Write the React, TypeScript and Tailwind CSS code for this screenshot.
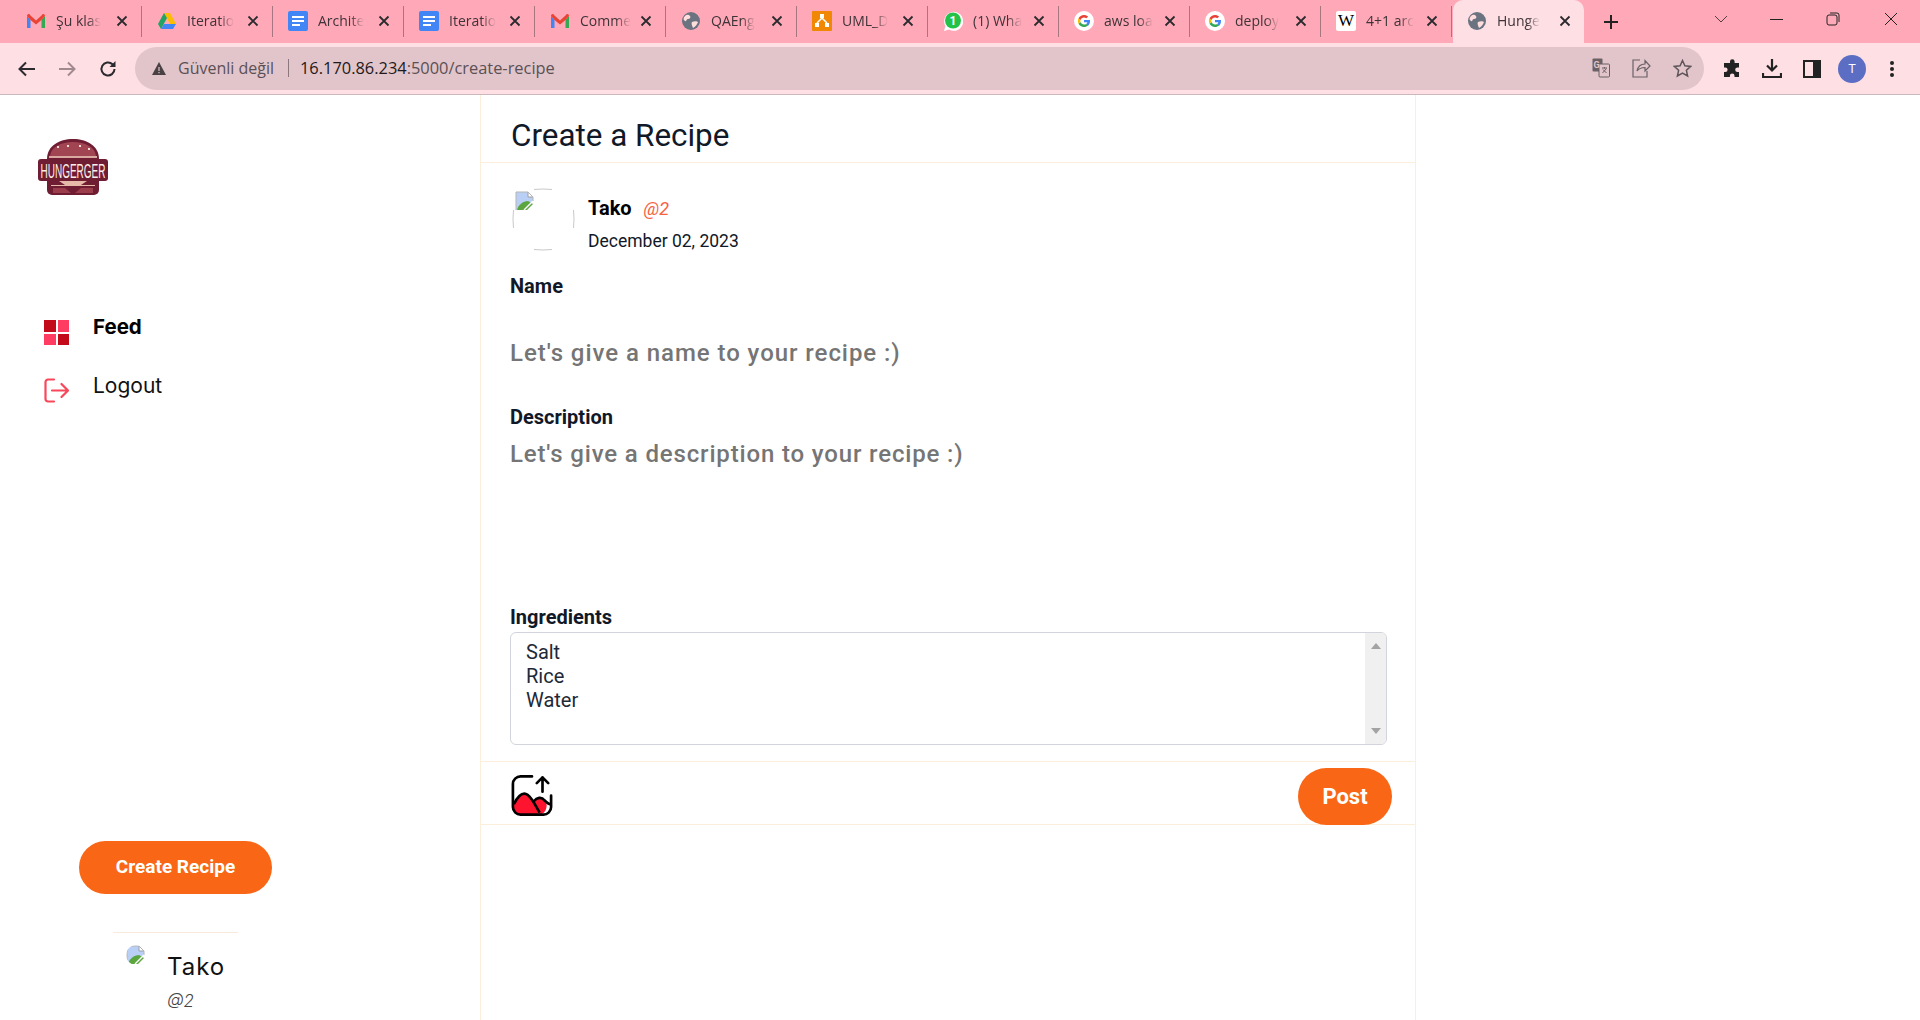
import React from 'react';

const GmailIcon = () => (
  <svg width="20" height="20" viewBox="0 0 20 20">
    <path d="M1 5v12h3.500V9L1 5z" fill="#4285f4" />
    <path d="M15.500 17H19V5l-3.500 4v8z" fill="#34a853" />
    <path d="M4.500 4.500 10 9.500l5.500-5 1-1.200c1.300-.6 2.500.4 2.500 1.700L15.500 9 10 13.500 4.500 9 1 5c0-1.300 1.200-2.300 2.500-1.700l1 1.200z" fill="#ea4335" />
  </svg>
);

const DriveIcon = () => (
  <svg width="20" height="20" viewBox="0 0 20 20">
    <path d="M7 2h6l6 11h-6L7 2z" fill="#fbbc04" />
    <path d="M7 2 1 13l3 5 6-11-3-5z" fill="#1fa463" />
    <path d="M4 18h12l3-5H7l-3 5z" fill="#4285f4" />
  </svg>
);

const DocsIcon = () => (
  <svg width="20" height="20" viewBox="0 0 20 20">
    <rect width="20" height="20" rx="2" fill="#4285f4" />
    <path d="M4 5h12v2H4zM4 9h12v2H4zM4 13h8v2H4z" fill="#fff" />
  </svg>
);

const GlobeIcon = () => (
  <svg width="18" height="18" viewBox="0 0 18 18">
    <circle cx="9" cy="9" r="9" fill="#6b7280" />
    <path d="M3 4c2-2 4-1 5 0s0 3-2 3-1 3-3 2-2-3 0-5zM10 10c2-1 5-1 6 0-1 3-3 5-5 6-1-2-2-5-1-6z" fill="#fdd" />
  </svg>
);

const DrawioIcon = () => (
  <svg width="20" height="20" viewBox="0 0 20 20">
    <rect width="20" height="20" rx="1" fill="#f08705" />
    <path d="M8 3h4v4H8zM3 12h4v4H3zM13 12h4v4h-4z" fill="#fff" />
    <path d="M10 7l-5 5M10 7l5 5" stroke="#fff" strokeWidth="1.500" />
  </svg>
);

const WhatsappIcon = () => (
  <svg width="20" height="20" viewBox="0 0 20 20">
    <path d="M1 20l1.400-5A9.500 9.500 0 1 1 6 18.600L1 20z" fill="#fff" />
    <circle cx="10" cy="9.500" r="8" fill="#25c24a" />
    <text x="10" y="14" textAnchor="middle" fontSize="12" fontWeight="700" fill="#fff" fontFamily="Roboto, sans-serif">1</text>
  </svg>
);

const GoogleIcon = () => (
  <svg width="20" height="20" viewBox="0 0 20 20">
    <circle cx="10" cy="10" r="10" fill="#fff" />
    <path d="M16 10.200c0-.5 0-.9-.1-1.300H10v2.400h3.400c-.2.800-.6 1.400-1.300 1.900l2 1.500c1.200-1.100 1.900-2.700 1.900-4.500z" fill="#4285f4" />
    <path d="M10 16c1.700 0 3-.6 4.100-1.500l-2-1.500c-.5.400-1.200.6-2.100.6-1.600 0-3-1.100-3.500-2.500l-2 1.600C5.500 14.600 7.600 16 10 16z" fill="#34a853" />
    <path d="M6.500 11.100c-.3-.7-.3-1.500 0-2.200l-2-1.600c-.8 1.600-.8 3.800 0 5.400l2-1.600z" fill="#fbbc05" />
    <path d="M10 6.400c.9 0 1.700.3 2.400.9l1.700-1.700C13 4.600 11.600 4 10 4 7.600 4 5.500 5.400 4.500 7.300l2 1.600C7 7.500 8.400 6.400 10 6.400z" fill="#ea4335" />
  </svg>
);

const WikiIcon = () => (
  <div className="flex h-5 w-5 items-center justify-center rounded-[2px] bg-white font-['Liberation_Serif',serif] text-[17px] leading-none text-black">W</div>
);

const tabs = [
  { icon: <GmailIcon />, title: 'Şu klas' },
  { icon: <DriveIcon />, title: 'Iteratio' },
  { icon: <DocsIcon />, title: 'Archite' },
  { icon: <DocsIcon />, title: 'Iteratio' },
  { icon: <GmailIcon />, title: 'Comme' },
  { icon: <GlobeIcon />, title: 'QAEng' },
  { icon: <DrawioIcon />, title: 'UML_D' },
  { icon: <WhatsappIcon />, title: '(1) Wha' },
  { icon: <GoogleIcon />, title: 'aws loa' },
  { icon: <GoogleIcon />, title: 'deploy' },
  { icon: <WikiIcon />, title: '4+1 arc' },
];

const CloseX = () => (
  <svg width="12" height="12" viewBox="0 0 12 12" className="shrink-0">
    <path d="M1.500 1.500l9 9M10.500 1.500l-9 9" stroke="#2b2b2f" strokeWidth="1.800" />
  </svg>
);

function BrowserChrome() {
  return (
    <div className="font-['Open_Sans',sans-serif]">
      <div className="flex h-[43px] items-center bg-[#ffa9b8] pl-[11px]">
        {tabs.map((tab, i) => (
          <div key={i} className="flex h-[31px] w-[131px] shrink-0 items-center border-r border-[#a87680] pb-[2px] pl-[15px] pr-[13px]">
            <div className="flex w-5 shrink-0 justify-center">{tab.icon}</div>
            <div className="ml-[10px] whitespace-nowrap text-[14px] text-[#3d3338] [mask-image:linear-gradient(to_right,black_70%,transparent)]">
              {tab.title}
            </div>
            <div className="ml-auto"><CloseX /></div>
          </div>
        ))}
        <div className="ml-[1px] flex h-[43px] w-[131px] shrink-0 items-center rounded-t-[10px] bg-[#fddfe4] pb-[2px] pl-[15px] pr-[13px]">
          <GlobeIcon />
          <div className="ml-[11px] whitespace-nowrap text-[14px] text-[#3d3338] [mask-image:linear-gradient(to_right,black_70%,transparent)]">Hunge</div>
          <div className="ml-auto"><CloseX /></div>
        </div>
        <svg width="16" height="16" viewBox="0 0 16 16" className="ml-[19px]">
          <path d="M8 1v14M1 8h14" stroke="#222" strokeWidth="2" />
        </svg>
        <svg width="14" height="8" viewBox="0 0 14 8" className="ml-[95px] mb-[5px]">
          <path d="M1 1l6 6 6-6" fill="none" stroke="#553b42" strokeWidth="1" />
        </svg>
        <div className="ml-[42px] mb-[5px] h-px w-[13px] bg-[#222]" />
        <svg width="14" height="14" viewBox="0 0 14 14" className="ml-[43px] mb-[5px]">
          <rect x="1" y="3" width="10" height="10" rx="2" fill="none" stroke="#222" />
          <path d="M4 1h7a2 2 0 0 1 2 2v7" fill="none" stroke="#222" />
        </svg>
        <svg width="14" height="14" viewBox="0 0 14 14" className="ml-[44px] mb-[5px]">
          <path d="M1 1l12 12M13 1L1 13" stroke="#222" strokeWidth="1" />
        </svg>
      </div>
      <div className="flex h-[52px] items-center border-b border-[#c9b9bd] bg-[#fddfe4] pl-[18px] pr-[19px]">
        <svg width="18" height="16" viewBox="0 0 18 16">
          <path d="M17 8H2M8 1.500 1.500 8 8 14.500" fill="none" stroke="#2b2b2f" strokeWidth="2" />
        </svg>
        <svg width="18" height="16" viewBox="0 0 18 16" className="ml-[22px]">
          <path d="M1 8h15M10 1.500 16.500 8 10 14.500" fill="none" stroke="#a08a90" strokeWidth="2" />
        </svg>
        <svg width="18" height="18" viewBox="0 0 18 18" className="ml-[23px]">
          <path d="M15.500 9a6.500 6.500 0 1 1-2-4.700L15.500 6" fill="none" stroke="#2b2b2f" strokeWidth="2" />
          <path d="M16.500 1v6h-6z" fill="#2b2b2f" />
        </svg>
        <div className="ml-[18px] flex h-[43px] w-[1569px] items-center rounded-full bg-[#e1c5ca] pl-[17px] pr-[12px] pb-[1px]">
          <svg width="14" height="13" viewBox="0 0 14 13">
            <path d="M7 0l7 13H0z" fill="#4a4145" />
            <path d="M6.400 5h1.200v4H6.400zM6.400 10h1.200v1.300H6.400z" fill="#e1c5ca" />
          </svg>
          <span className="ml-[12px] w-[103px] whitespace-nowrap text-[16px] text-[#5b5055]">Güvenli değil</span>
          <div className="ml-[7px] h-[18px] w-px bg-[#8b777c]" />
          <span className="ml-[11px] whitespace-nowrap text-[16.4px] text-[#5b5055]"><span className="text-[#1f1a1c]">16.170.86.234</span>:5000/create-recipe</span>
          <div className="ml-auto flex items-center gap-[22px]">
            <svg width="18" height="20" viewBox="0 0 18 20">
              <rect x="0.500" y="0.500" width="10" height="13" rx="1" fill="#6a6065" />
              <rect x="7" y="6" width="10.500" height="13" rx="1" fill="#e1c5ca" stroke="#6a6065" />
              <path d="M10 10h5M12.500 9v1.500M14.500 10.500 10.500 15M11 11.500l3.500 3.500" fill="none" stroke="#6a6065" />
              <text x="1.500" y="10" fontSize="9" fontWeight="700" fill="#e1c5ca" fontFamily="Roboto, sans-serif">G</text>
            </svg>
            <svg width="19" height="20" viewBox="0 0 19 20">
              <path d="M8 2H1v17h14v-6" fill="none" stroke="#6a6065" strokeWidth="1.200" />
              <path d="M5 13c1-5 4-7 8-7V2.500L18 8l-5 5V9.500c-3 0-6 1-8 3.500z" fill="none" stroke="#6a6065" strokeWidth="1.200" />
            </svg>
            <svg width="19" height="19" viewBox="0 0 19 19">
              <path d="M9.500 1.500l2.400 5.300 5.800.6-4.300 3.900 1.200 5.700-5.100-2.900-5.100 2.900 1.200-5.700L1.300 7.400l5.800-.6z" fill="none" stroke="#5f555a" strokeWidth="1.500" />
            </svg>
          </div>
        </div>
        <svg width="19" height="19" viewBox="0 0 19 19" className="ml-[19px]">
          <path d="M7 2.500a2.300 2.300 0 0 1 4.600 0V4H16v4.500h-1.500a2.300 2.300 0 0 0 0 4.600H16V18h-4.500v-1.300a2.300 2.300 0 0 0-4.600 0V18H1v-5h1.300a2.300 2.300 0 0 0 0-4.600H1V4h6z" fill="#222" />
        </svg>
        <svg width="20" height="21" viewBox="0 0 20 21" className="ml-[20px]">
          <path d="M10 1v11M5 7.500l5 5 5-5" fill="none" stroke="#222" strokeWidth="2.200" />
          <path d="M1 15v4h18v-4" fill="none" stroke="#222" strokeWidth="2.200" />
        </svg>
        <svg width="18" height="18" viewBox="0 0 18 18" className="ml-[21px]">
          <rect x="1" y="1" width="16" height="16" fill="none" stroke="#222" strokeWidth="2" />
          <rect x="10" y="1" width="7" height="16" fill="#222" />
        </svg>
        <div className="ml-[17px] flex h-7 w-7 items-center justify-center rounded-full bg-[#5b6ec4] text-[13px] text-white">T</div>
        <svg width="4" height="16" viewBox="0 0 4 16" className="ml-[24px]">
          <circle cx="2" cy="2" r="2" fill="#222" />
          <circle cx="2" cy="8" r="2" fill="#222" />
          <circle cx="2" cy="14" r="2" fill="#222" />
        </svg>
      </div>
    </div>
  );
}

const Logo = () => (
  <svg width="72" height="58" viewBox="0 0 72 58">
    <path d="M10 21C10 8 22 1 36 1s26 7 26 20z" fill="#6f1d33" />
    <path d="M13 18C14 9 24 4 36 4s22 5 23 14z" fill="#a24552" />
    <path d="M20 8h2v2h-2zM30 7h2v2h-2zM42 7h2v2h-2zM51 10h2v2h-2z" fill="#f3d9d3" />
    <path d="M12 18h48v2H12z" fill="#d9a9a0" />
    <rect x="1" y="21" width="70" height="22" rx="3" fill="#6f1d33" />
    <text x="36" y="20.500" textAnchor="middle" transform="scale(1 1.950)" fontSize="10" fill="#fbeee6" fontFamily="'Liberation Sans', sans-serif">HUNGERGER</text>
    <path d="M10 43h52v9a5 5 0 0 1-5 5H15a5 5 0 0 1-5-5z" fill="#6f1d33" />
    <path d="M22 43h28l-6 4H28z" fill="#e6b9a8" />
    <path d="M14 47h44v1H14z" fill="#e6b9a8" />
    <path d="M16 50h12l6 5H16zM56 50H44l-6 5h18z" fill="#9c3d4c" />
  </svg>
);

const BrokenImage = ({ size }: { size: number }) => (
  <svg width={size} height={size} viewBox="0 0 20 20">
    <path d="M1 1h12l5 5v5L1 19z" fill="#b9cff5" />
    <path d="M13 1v5h5" fill="#fff" stroke="#9aa0a6" />
    <path d="M1 19V1h12l5 5v4" fill="none" stroke="#b5b5b5" />
    <path d="M2 19c1-5 6-9 11-9L5 19z" fill="#5ba63f" />
    <path d="M4 19c2-4 5-7 9-9l5 3-6 6z" fill="#5ba63f" />
    <path d="M9 19l9-9" stroke="#fff" strokeWidth="1.500" />
  </svg>
);

function Sidebar() {
  return (
    <aside className="flex h-[917px] w-[480px] shrink-0 flex-col pl-[37px] font-['Inter',sans-serif]">
      <div className="mt-[43px]"><Logo /></div>
      <nav className="mt-[112px] flex flex-col">
        <div className="flex items-start pl-[7px]">
          <div className="mt-[12px] grid h-[25px] w-[25px] grid-cols-2 gap-[2px]">
            <div className="bg-[#c30a1b]" />
            <div className="bg-[#ff3d63]" />
            <div className="bg-[#ff3d63]" />
            <div className="bg-[#c30a1b]" />
          </div>
          <span className="ml-[24px] text-[20.500px] font-bold leading-[38px] text-black">Feed</span>
        </div>
        <div className="mt-[21px] flex items-start pl-[7px]">
          <svg width="25" height="25" viewBox="0 0 25 25" className="mt-[11px]">
            <path d="M10 1.500H4A2.500 2.500 0 0 0 1.500 4v17A2.500 2.500 0 0 0 4 23.500h6M8 12.500h16M17.500 6l6.500 6.500-6.500 6.500" fill="none" stroke="#f9475a" strokeWidth="2.200" strokeLinecap="round" strokeLinejoin="round" />
          </svg>
          <span className="ml-[24px] text-[21px] leading-[38px] text-[#111]">Logout</span>
        </div>
      </nav>
      <div className="mt-auto ml-[42px] flex h-[53px] w-[193px] items-center justify-center rounded-full bg-[#f96716] font-['Roboto',sans-serif] text-[19px] font-bold text-white">
        Create Recipe
      </div>
      <div className="ml-[76px] mt-[38px] w-[125px] border-t border-[#f7ebdd]" />
      <div className="ml-[89px] flex">
        <div className="mt-[12px] h-5 w-5 overflow-hidden rounded-full">
          <BrokenImage size={20} />
        </div>
        <div className="ml-[21px] mt-[18px] flex flex-col">
          <span className="text-[24px] leading-[32px] tracking-[1px] text-[#111]">Tako</span>
          <span className="mt-[7px] text-[17px] italic font-light leading-[22px] text-[#444]">@2</span>
        </div>
      </div>
    </aside>
  );
}

function RecipeForm() {
  return (
    <main className="h-[925px] w-[936px] border-x border-[#fbeedb] font-['Roboto',sans-serif] text-[#111827]">
      <div className="flex h-[68px] items-center border-b border-[#fbeedb] pl-[30px] pt-[14px] text-[31.400px]">Create a Recipe</div>

      <div className="pl-[29px] pt-[25px]">
        <div className="flex">
          <div className="relative ml-[2px] h-[63px] w-[63px]">
            <svg width="63" height="63" viewBox="0 0 63 63" className="absolute left-0 top-0">
              <path d="M22 1.500Q31 .5 40 1.500M61.500 22Q62.500 31 61.500 40M22 61.500Q31 62.500 40 61.500M1.500 22Q.5 31 1.500 40" fill="none" stroke="#c9c9c9" />
            </svg>
            <div className="absolute left-[3px] top-[3px]"><BrokenImage size={20} /></div>
          </div>
          <div className="ml-[13px] flex flex-col">
            <div className="mt-[4px] flex items-baseline leading-[32px]">
              <span className="text-[20px] font-bold text-black">Tako</span>
              <span className="ml-[12px] text-[18px] italic text-[#f9613f]">@2</span>
            </div>
            <span className="text-[17.500px] leading-[32px]">December 02, 2023</span>
          </div>
        </div>

        <div className="mt-[17px] text-[20px] font-bold leading-[24px]">Name</div>
        <div className="mt-[40px] text-[24px] font-medium leading-[30px] tracking-[0.95px] text-[#757575]">Let's give a name to your recipe :)</div>

        <div className="mt-[37px] text-[20px] font-bold leading-[24px]">Description</div>
        <div className="mt-[10px] text-[24px] font-medium leading-[30px] tracking-[0.85px] text-[#757575]">Let's give a description to your recipe :)</div>

        <div className="mt-[136px] text-[20px] font-bold leading-[24px]">Ingredients</div>
        <div className="mt-[3px] flex h-[113px] w-[877px] overflow-hidden rounded-md border border-[#d1d5db]">
          <div className="flex-1 px-[15px] py-[7px] text-[20px] leading-[24px] text-[#1f2937]">
            <div>Salt</div>
            <div>Rice</div>
            <div>Water</div>
          </div>
          <div className="flex w-[21px] flex-col items-center justify-between bg-[#f0f0f0] py-[10px]">
            <div className="h-0 w-0 border-x-[5px] border-b-[6px] border-x-transparent border-b-[#a3a3a3]" />
            <div className="h-0 w-0 border-x-[5px] border-t-[6px] border-x-transparent border-t-[#a3a3a3]" />
          </div>
        </div>
      </div>

      <div className="mt-[16px] flex h-[64px] items-start justify-between border-y border-[#fbeedb] pl-[30px] pr-[23px]">
        <svg width="42" height="43" viewBox="0 0 44 44" className="mt-[12px]">
          <path d="M3 30c3-5 7-10 11-10 4 0 7 5 10 8 3-4 8-5 11-1 2 2 3 5 2 8-1 4-4 7-7 7H10c-4 0-7-4-7-8z" fill="#ff1430" />
          <path d="M22 2H10a8 8 0 0 0-8 8v24a8 8 0 0 0 8 8h24a8 8 0 0 0 8-8V22" fill="none" stroke="#000" strokeWidth="2.800" strokeLinecap="round" />
          <path d="M3 31c3-6 7-11 11-11 5 0 10 9 16 20M24 28c3-4 8-5 11-1 2 2 4 4 6 4" fill="none" stroke="#000" strokeWidth="2.800" />
          <path d="M33 18V3M27 9l6-6 6 6" fill="none" stroke="#000" strokeWidth="2.800" strokeLinecap="round" strokeLinejoin="round" />
        </svg>
        <div className="mt-[6px] flex h-[57px] w-[94px] items-center justify-center rounded-full bg-[#f96716] text-[22px] font-bold text-white">Post</div>
      </div>
    </main>
  );
}

export default function App() {
  return (
    <div className="h-[1020px] w-[1920px] overflow-hidden bg-white">
      <BrowserChrome />
      <div className="flex">
        <Sidebar />
        <RecipeForm />
      </div>
    </div>
  );
}
